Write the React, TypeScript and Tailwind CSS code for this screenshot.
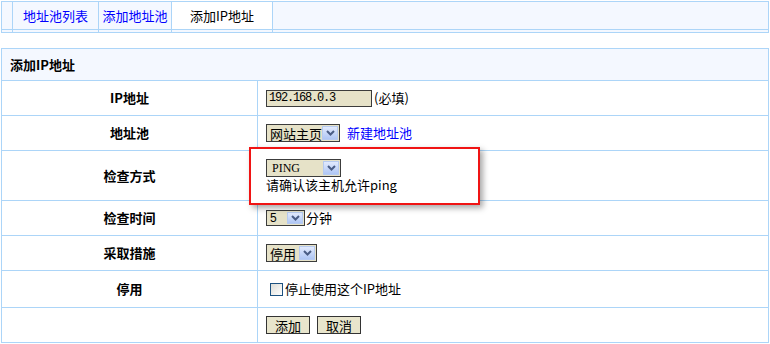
import React from 'react'

const line = 'border-[#acd5f8]'

function Chevron() {
  return (
    <svg width="9" height="6" viewBox="0 0 9 6">
      <path d="M1 1l3.5 3.5L8 1" fill="none" stroke="#4a5d85" strokeWidth="2" />
    </svg>
  )
}

function Dropdown({ text, className, textClass = '' }: { text: string; className: string; textClass?: string }) {
  return (
    <div className={`flex border border-[#3c3c3c] bg-[#e6e2c8] ${className}`}>
      <span className={`flex-1 min-w-0 flex items-center pl-[3px] leading-none whitespace-nowrap ${textClass}`}>{text}</span>
      <span className="w-[16px] shrink-0 m-px flex items-center justify-center border border-[#b6caf0] bg-linear-to-b from-[#e2eafd] to-[#afc6f4]">
        <Chevron />
      </span>
    </div>
  )
}

function Row({ label, h, last, children }: { label: string; h: string; last?: boolean; children?: React.ReactNode }) {
  return (
    <div className={`flex ${h} ${last ? '' : `border-b ${line}`}`}>
      <div className={`w-[256px] shrink-0 border-r ${line} flex items-center justify-center font-bold`}>{label}</div>
      <div className="flex-1 flex items-center pl-2 relative">{children}</div>
    </div>
  )
}

const tabs = [
  { w: 'w-[11px]', text: '', active: false, link: false },
  { w: 'w-[86px]', text: '地址池列表', active: false, link: true },
  { w: 'w-[73px]', text: '添加地址池', active: false, link: true },
  { w: 'w-[101px]', text: '添加IP地址', active: true, link: false },
]

export default function App() {
  return (
    <div className="w-[770px] h-[344px] bg-white text-black text-[13px] font-['Noto_Sans_CJK_SC',sans-serif] pt-px">
      {/* tab bar */}
      <div className={`mx-px border ${line} bg-[#f4f8ff] flex`}>
        {tabs.map((t, i) => (
          <div key={i} className={`${t.w} shrink-0 flex flex-col border-r ${line}`}>
            <div className={`h-[28px] border-b ${line} flex items-center justify-center whitespace-nowrap ${t.active ? 'bg-white' : ''} ${t.link ? 'text-[#0000ff]' : ''}`}>
              {t.text}
            </div>
            <div className="h-[2px]" />
          </div>
        ))}
        <div className="flex-1 flex flex-col">
          <div className={`h-[28px] border-b ${line}`} />
          <div className="h-[2px]" />
        </div>
      </div>

      {/* form */}
      <div className={`mx-px mt-[15px] border ${line}`}>
        <div className={`h-[32px] border-b ${line} bg-[#f4f8ff] pl-2 flex items-center font-bold`}>添加IP地址</div>

        <Row label="IP地址" h="h-[35px]">
          <input
            readOnly
            value="192.168.0.3"
            className="w-[106px] h-[17px] border border-[#3c3c3c] bg-[#e6e2c8] pl-[2px] font-['Liberation_Mono',monospace] text-[12px] tracking-[-1.2px] leading-none outline-none"
          />
          <span className="ml-[2px]">(必填)</span>
        </Row>

        <Row label="地址池" h="h-[35px]">
          <Dropdown text="网站主页" className="w-[74px] h-[18px]" textClass="pl-[3px]" />
          <span className="ml-[7px] text-[#0000ff]">新建地址池</span>
        </Row>

        <Row label="检查方式" h="h-[50px]">
          <div className="absolute left-[-9px] top-[-4px] w-[231px] h-[58px] z-10 bg-white border-2 border-[#f01414] shadow-[3px_3px_6px_rgba(0,0,0,0.35)] pl-[15px] pt-[10px]">
            <Dropdown text="PING" className="w-[75px] h-[18px]" textClass="pl-[5px] font-['Liberation_Serif',serif] text-[12px]" />
            <div className="leading-[16px] whitespace-nowrap">请确认该主机允许ping</div>
          </div>
        </Row>

        <Row label="检查时间" h="h-[35px]">
          <Dropdown text="5" className="w-[39px] h-[16px]" textClass="font-['Liberation_Sans',sans-serif] text-[12px]" />
          <span className="ml-px">分钟</span>
        </Row>

        <Row label="采取措施" h="h-[35px]">
          <Dropdown text="停用" className="w-[51px] h-[18px]" />
        </Row>

        <Row label="停用" h="h-[37px]">
          <span className="ml-[4px] w-[13px] h-[13px] border border-[#1c5180] bg-linear-to-br from-[#dcdcd6] to-white" />
          <span className="ml-[2px]">停止使用这个IP地址</span>
        </Row>

        <Row label="" h="h-[34px]" last>
          <button className="w-[44px] h-[18px] border border-[#333] bg-[#e8e5cc] leading-none">添加</button>
          <button className="ml-[7px] w-[44px] h-[18px] border border-[#333] bg-[#e8e5cc] leading-none">取消</button>
        </Row>
      </div>
    </div>
  )
}
